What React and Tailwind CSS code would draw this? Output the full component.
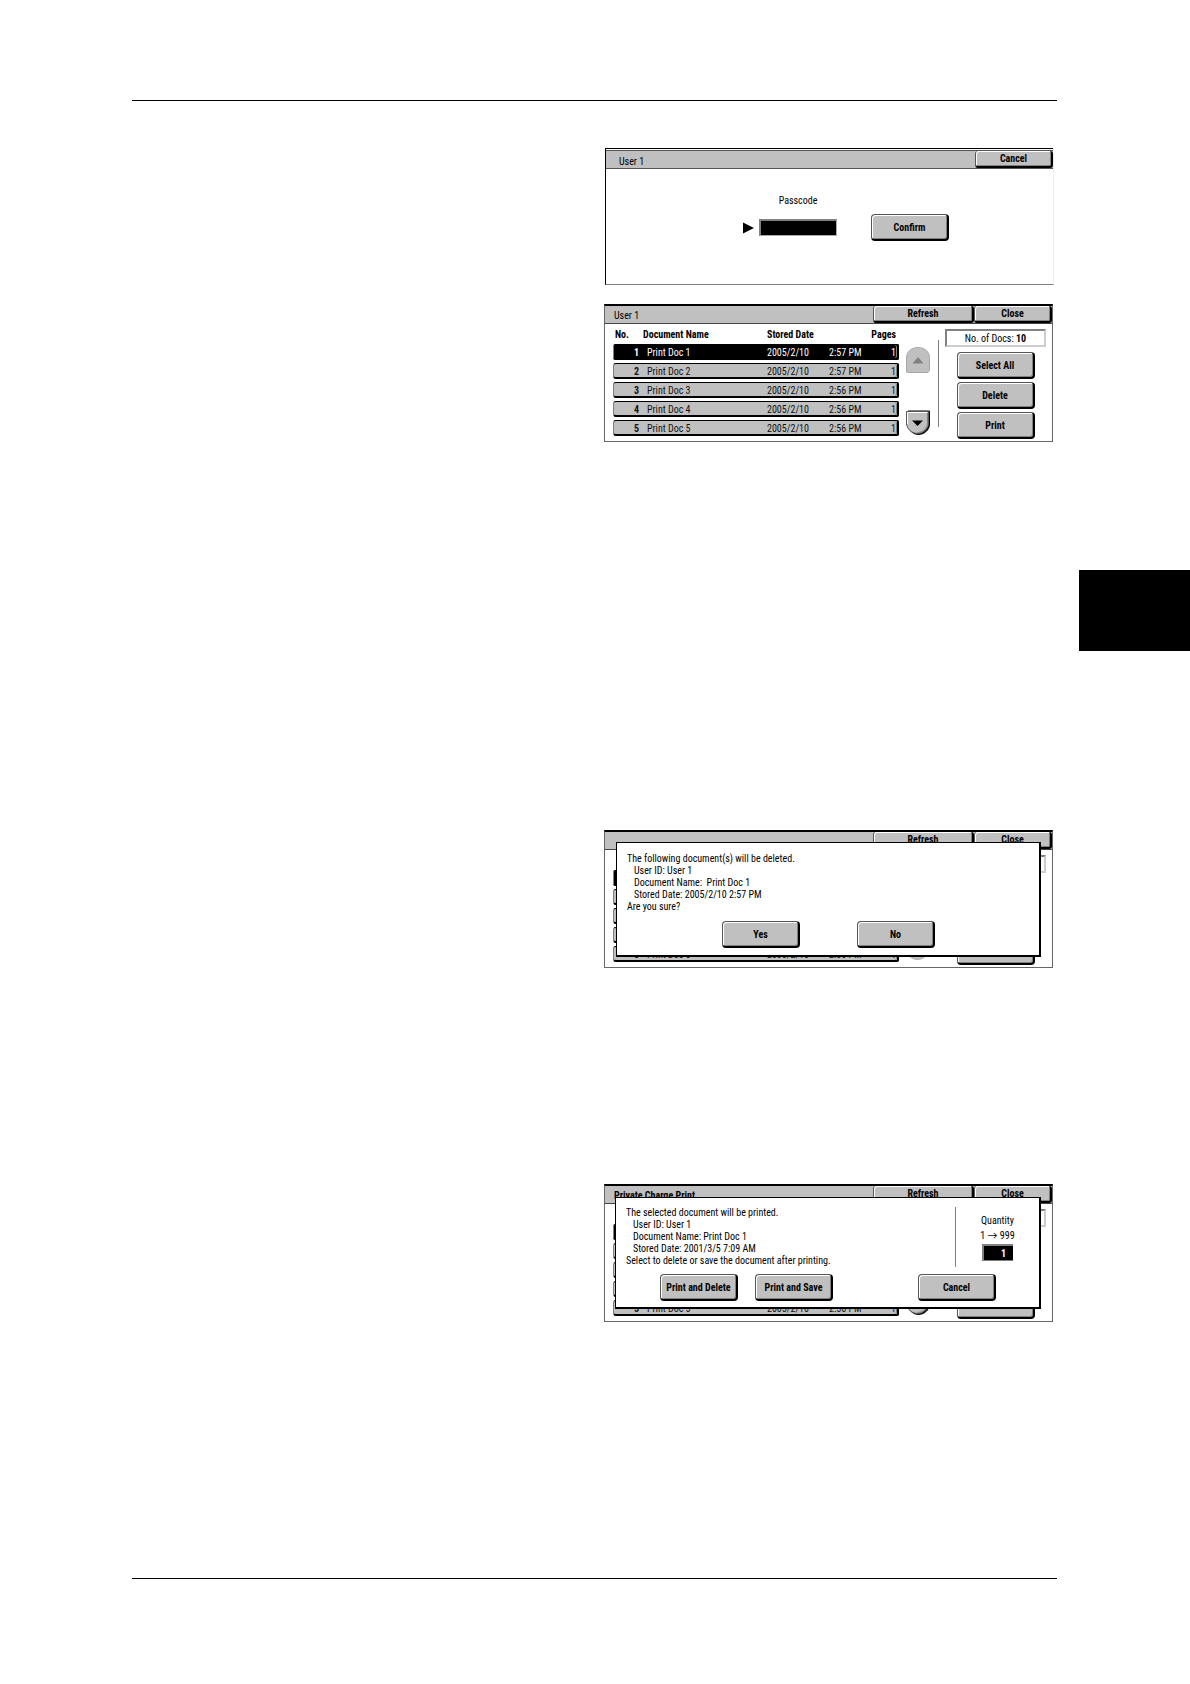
import clsx from "clsx";

const DOCS = [
  { no: 1, name: "Print Doc 1", date: "2005/2/10", time: "2:57 PM", pages: 1 },
  { no: 2, name: "Print Doc 2", date: "2005/2/10", time: "2:57 PM", pages: 1 },
  { no: 3, name: "Print Doc 3", date: "2005/2/10", time: "2:56 PM", pages: 1 },
  { no: 4, name: "Print Doc 4", date: "2005/2/10", time: "2:56 PM", pages: 1 },
  { no: 5, name: "Print Doc 5", date: "2005/2/10", time: "2:56 PM", pages: 1 },
];

function PanelButton({ children, className }) {
  return (
    <button
      type="button"
      className={clsx(
        "h-[27px] w-[78px] rounded-[4px] border border-r-2 border-b-2 border-black border-t-[#555] border-l-[#555] bg-[#c0c0c0] pt-px text-center font-bold whitespace-nowrap shadow-[inset_1px_1px_0_#fff,inset_-1px_-1px_0_#808080]",
        className
      )}
    >
      {children}
    </button>
  );
}

function BarButton({ children, className }) {
  return (
    <button
      type="button"
      className={clsx(
        "h-[17px] rounded-[3px] border-r-2 border-b-2 border-l border-black border-l-[#555] bg-[#c0c0c0] pt-px text-center leading-[14px] font-bold shadow-[inset_1px_1px_0_#fff,inset_-1px_-1px_0_#808080]",
        className
      )}
    >
      {children}
    </button>
  );
}

function ScrollUp() {
  return (
    <button type="button" aria-label="Scroll up" disabled className="block">
      <svg width="24" height="26" viewBox="0 0 24 26">
        <path d="M.5 25V11C.5 4 6 .5 12 .5S23.500 4 23.500 11V23.500L22 25.500H1.500Z" fill="#c0c0c0" stroke="#a8a8a8" />
        <path d="M12 10L17.500 16.500H6.500Z" fill="#808080" />
      </svg>
    </button>
  );
}

function ScrollDown({ disabled }) {
  return (
    <button type="button" aria-label="Scroll down" disabled={disabled} className="block">
      <svg width="25" height="26" viewBox="0 0 25 26">
        {!disabled && <path d="M2 1H23.500V14C23.500 20 18 24.500 12.500 24.500S2 20 2 14Z" fill="#000" stroke="#000" />}
        <path d="M.5 1.500H22.500V13C22.500 19 17 23.500 11.500 23.500S.5 19 .5 13Z" fill="#c0c0c0" stroke={disabled ? "#a8a8a8" : "#555"} />
        {!disabled && (
          <>
            <path d="M1.500 14V2.500H21" fill="none" stroke="#fff" />
            <path d="M21.500 3V13C21.500 18 17 22.500 11.500 22.500" fill="none" stroke="#808080" />
          </>
        )}
        <path d="M11.500 16L17 10.500H6Z" fill={disabled ? "#808080" : "#000"} />
      </svg>
    </button>
  );
}

function DocumentTable({ covered }) {
  return (
    <table className="w-[286px] table-fixed border-separate border-spacing-x-0 border-spacing-y-[3px] text-left">
      <colgroup>
        <col className="w-[30px]" />
        <col />
        <col className="w-[62px]" />
        <col className="w-[42px]" />
        <col className="w-[28px]" />
      </colgroup>
      <thead>
        <tr className="h-[14px] leading-[12px] whitespace-nowrap *:pt-[2px]">
          {!covered && (
            <>
              <th className="pl-[2px]">No.</th>
              <th>Document Name</th>
              <th colSpan={2}>Stored Date</th>
              <th>
                <span className="float-right pr-[3px]">Pages</span>
              </th>
            </>
          )}
        </tr>
      </thead>
      <tbody>
        {DOCS.map((doc) => {
          // the last row reaches out from under the dialog
          const shown = !covered || doc.no === 5;
          return (
            <tr
              key={doc.no}
              className={clsx(
                "h-[16px] leading-[11px] whitespace-nowrap *:border-t *:border-b-2 *:border-black *:px-0 *:pt-[2px] *:pb-0",
                doc.no === 1 ? "bg-black text-white" : "bg-[#c0c0c0] text-[#111]"
              )}
            >
              <td className="rounded-l-[3px] border-l border-l-[#808080]!">
                {shown && <b className="block pr-[4px] text-right">{doc.no}</b>}
              </td>
              <td>{shown && <span className="pl-[4px]">{doc.name}</span>}</td>
              <td>{shown && doc.date}</td>
              <td>{shown && doc.time}</td>
              <td className="rounded-r-[2px] border-r-2 text-right shadow-[inset_-1px_0_0_#808080]">
                {shown && <span className="pr-[1px]">{doc.pages}</span>}
              </td>
            </tr>
          );
        })}
      </tbody>
    </table>
  );
}

// covered: a dialog lies over the list, so only the frames around it show
function DocumentPanel({ title, boldTitle, total, covered, downDisabled, className, children }) {
  return (
    <section className={clsx("relative border border-t-2 border-[#666] border-t-black", className)}>
      <header className="flex h-[18px] items-start border-b border-[#444] bg-[#c0c0c0]">
        <h2 className={clsx("flex-1 pl-[9px] leading-[20px]", boldTitle && "font-bold")}>{title}</h2>
        <BarButton className="w-[101px]">Refresh</BarButton>
        <BarButton className="w-[78px]">Close</BarButton>
      </header>

      <div className="flex items-start pb-[2px] pl-[8px]">
        <DocumentTable covered={covered} />
        <div className="mb-[3px] ml-[7px] flex h-[89px] flex-col justify-between self-end">
          <ScrollUp />
          <ScrollDown disabled={downDisabled} />
        </div>
        <div className="mt-[16px] ml-[7px] h-[87px] border-l border-[#808080]" />
        <div className="flex flex-1 flex-col items-center gap-[3px] pt-[5px]">
          <p className="mb-[2px] h-[18px] w-[101px] border-2 border-[#808080] border-r-[#ccc] border-b-[#ccc] text-center leading-[15px]">
            {total !== undefined && (
              <>
                No. of Docs: <b>{total}</b>
              </>
            )}
          </p>
          <PanelButton>{!covered && "Select All"}</PanelButton>
          <PanelButton>{!covered && "Delete"}</PanelButton>
          <PanelButton>{!covered && "Print"}</PanelButton>
        </div>
      </div>
      {children}
    </section>
  );
}

function Dialog({ className, children }) {
  return (
    <div
      role="dialog"
      className={clsx("absolute border border-r-2 border-b-2 border-black bg-white", className)}
    >
      {children}
    </div>
  );
}

function PasscodePanel() {
  return (
    <section className="mr-[3px] ml-auto w-[449px] border border-t-0 border-[#808080] border-r-[#eee] border-l-black">
      <div className="h-[2px] border-t border-black" />
      <header className="flex h-[19px] items-start border-t border-b border-[#555] bg-[#c0c0c0]">
        <h2 className="flex-1 pl-[13px] leading-[21px]">User 1</h2>
        <BarButton className="w-[78px]">Cancel</BarButton>
      </header>
      <form className="grid grid-cols-[16px_78px_112px] items-center pt-[25px] pb-[43px] pl-[137px]">
        <label htmlFor="passcode" className="col-start-2 h-[20px] text-center leading-[14px]">
          Passcode
        </label>
        <svg width="11" height="12" className="col-start-1" aria-hidden="true">
          <path d="M0 0.500L11 6L0 11.500Z" />
        </svg>
        <input
          id="passcode"
          type="password"
          className="h-[17px] w-[78px] border-2 border-r border-b border-[#808080] border-r-[#aaa] border-b-[#aaa] bg-black px-1 text-white outline-none"
        />
        <PanelButton className="justify-self-end">Confirm</PanelButton>
      </form>
    </section>
  );
}

function App() {
  return (
    <div className="flex min-h-screen bg-white font-['Roboto_Condensed','Lato',sans-serif] text-[10px] text-black">
      <main className="flex-1 pt-[100px] pr-[22px] pl-[132px]">
        <hr className="mb-[47px] border-black" />

        <PasscodePanel />

        <DocumentPanel title="User 1" total={10} className="mt-[19px] mr-[4px] ml-auto w-[449px]" />

        <DocumentPanel covered downDisabled className="mt-[388px] mr-[4px] ml-auto w-[449px]">
          <Dialog className="top-[10px] right-[11px] left-[11px] px-[10px] pt-[10px] pb-[7px]">
            <div className="leading-[12px]">
              <p>The following document(s) will be deleted.</p>
              <p className="pl-[7px]">User ID: User 1</p>
              <p className="pl-[7px]">Document Name: &nbsp;Print Doc 1</p>
              <p className="pl-[7px]">Stored Date: 2005/2/10 2:57 PM</p>
              <p>Are you sure?</p>
            </div>
            <div className="mt-[8px] flex gap-[57px] pl-[95px]">
              <PanelButton>Yes</PanelButton>
              <PanelButton>No</PanelButton>
            </div>
          </Dialog>
        </DocumentPanel>

        <DocumentPanel title="Private Charge Print" boldTitle covered className="mt-[216px] mr-[4px] ml-auto w-[449px]">
          <Dialog className="top-[11px] right-[11px] left-[10px] pt-[9px] pb-[6px] pl-[10px]">
            <div className="flex">
              <div className="flex-1 leading-[12px]">
                <p>The selected document will be printed.</p>
                <p className="pl-[7px]">User ID: User 1</p>
                <p className="pl-[7px]">Document Name: Print Doc 1</p>
                <p className="pl-[7px]">Stored Date: 2001/3/5 7:09 AM</p>
                <p>Select to delete or save the document after printing.</p>
              </div>
              <div className="flex w-[84px] flex-col items-center border-l border-[#808080] pt-[6px]">
                <label htmlFor="quantity" className="leading-[15px]">
                  Quantity
                </label>
                <span className="leading-[16px]">1 → 999</span>
                <input
                  id="quantity"
                  type="text"
                  defaultValue="1"
                  className="h-[17px] w-[31px] border-2 border-r-0 border-b border-[#808080] bg-black pr-[7px] text-right font-bold text-white outline-none"
                />
              </div>
            </div>
            <div className="mt-[7px] flex pl-[34px]">
              <PanelButton>Print and Delete</PanelButton>
              <PanelButton className="ml-[17px]">Print and Save</PanelButton>
              <PanelButton className="ml-[85px]">Cancel</PanelButton>
            </div>
          </Dialog>
        </DocumentPanel>

        <hr className="mt-[256px] border-black" />
      </main>

      {/* chapter tab on the page edge */}
      <aside className="w-[111px] pt-[570px]">
        <div className="h-[81px] bg-black" />
      </aside>
    </div>
  );
}

export default App;
